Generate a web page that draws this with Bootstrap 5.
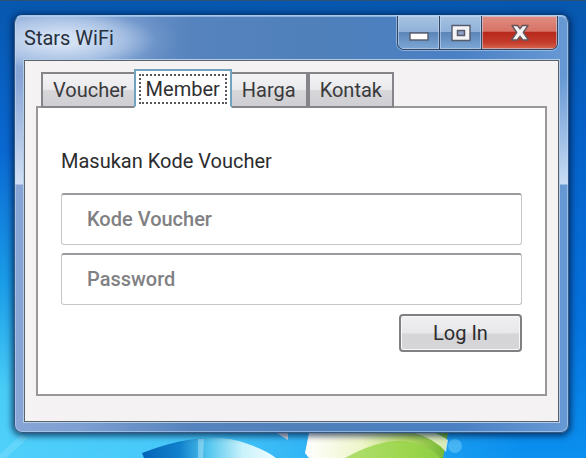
<!DOCTYPE html>
<html lang="id">
<head>
<meta charset="utf-8">
<meta name="viewport" content="width=device-width, initial-scale=1">
<title>Stars WiFi</title>
<link href="https://cdn.jsdelivr.net/npm/bootstrap@5.3.0/dist/css/bootstrap.min.css" rel="stylesheet">
<style>
body{font-family:Roboto,"Liberation Sans",sans-serif;font-size:20px;line-height:24px;color:#2c2c2e;background:#0560c4}
.wallpaper{z-index:-1}
.aero{margin:15px 17px 0 14px;padding:0 9px 10px;border-radius:8px;border:1px solid #36587f;border-top-color:#a9c8e6;
 background:radial-gradient(ellipse 115px 38px at 48px 24px,rgba(226,237,250,.85) 15%,rgba(205,222,244,.55) 55%,rgba(150,180,220,.2) 80%,transparent 100%),linear-gradient(to bottom,transparent 0,transparent 60px,rgba(235,243,255,.75) 168px,transparent 169px),linear-gradient(90deg,#88a5d6 0,#7d9fd2 12%,#5683bd 32%,#4f80ba 55%,#4a80c4 80%,#6799d4 100%);
 box-shadow:inset 0 0 0 1px rgba(190,220,250,.55),0 1px 6px 2px rgba(0,20,60,.7)}
.aero-title{height:44px}
.caption{font-size:20px;line-height:24px;font-weight:400;margin:10px 0 0;color:#26303e}
.win-controls{height:34px;border:1px solid #34445e;border-top:0;border-radius:0 0 7px 7px;overflow:hidden;box-shadow:0 0 0 1px rgba(180,210,240,.6);margin-right:1px}
.win-btn{width:42px;padding:0;border:0;border-right:1px solid #34445e;background:linear-gradient(#a8c3e2 0,#8fb0d8 48%,#5c85b8 50%,#7da7d4 100%);box-shadow:inset 0 0 0 1px rgba(200,222,245,.55)}
.win-close{width:75px;border-right:0;background:linear-gradient(#e08d82 0,#d77266 46%,#b8281c 50%,#c43c2b 80%,#d8664f 100%)}
.client{background:#f5f2f4;border:1px solid #59636f;box-shadow:0 0 0 1px #b4cbe4;padding:8px 11px 25px}
.tabs-row{padding-left:5px;border:0;margin-bottom:-2px}
.tabs-row .nav-link{font-size:20px;line-height:24px;color:#3a3a3c;padding:4px 10px;height:36px;border:2px solid #858589;border-radius:0;margin:0;background:linear-gradient(#f3f2f4 0,#eae9eb 48%,#d7d6d9 52%,#cfced2 100%)}
.tabs-row .nav-link.active{height:39px;padding:3px;margin:0 -2px 0 -5px;border-color:#71a2bf;border-bottom-color:#fff;background:#fff;color:#303033;z-index:1}
.dotted-focus{display:block;border:2px dotted #58585a;padding:1px 5px;height:30px}
.pane{background:#fff;border:2px solid #98979a;padding:41px 23px 42px 23px}
.prompt{margin-bottom:20px;line-height:24px}
.pane .form-control{height:52px;border:1px solid #c6c5c9;border-top:2px solid #9b9b9f;border-radius:3px;padding:0 25px 2px;font-size:20px;font-weight:500;margin-bottom:8px;background:#fff}
.pane .form-control::placeholder{color:#818184;opacity:1}
.login-btn{width:123px;height:38px;padding:0;font-size:20px;line-height:24px;color:#2c2c2e;border:2px solid #808083;border-radius:4px;background:linear-gradient(#f0eff1 0,#e8e7e9 48%,#d5d4d7 55%,#d6d5d8 100%);box-shadow:inset 0 0 0 1px #f8f8f9;margin-top:1px}
</style>
<script src="https://cdn.jsdelivr.net/npm/bootstrap@5.3.0/dist/js/bootstrap.bundle.min.js"></script>
</head>
<body class="vh-100 overflow-hidden position-relative">
<svg class="wallpaper position-absolute top-0 start-0 w-100 h-100" viewBox="0 0 586 458" preserveAspectRatio="none" aria-hidden="true">
 <defs>
  <linearGradient id="sky" x1="0" y1="0" x2="0" y2="1"><stop offset="0" stop-color="#0757ad"/><stop offset=".3" stop-color="#0561c8"/><stop offset=".7" stop-color="#0672dc"/><stop offset="1" stop-color="#0a90ef"/></linearGradient>
  <linearGradient id="skyLeft" x1="0" y1="0" x2="0" y2="1"><stop offset="0" stop-color="#0757ad"/><stop offset=".33" stop-color="#0a68d2"/><stop offset=".62" stop-color="#1a9de8"/><stop offset=".85" stop-color="#48cdf7"/><stop offset="1" stop-color="#50d0fb"/></linearGradient>
  <linearGradient id="fade" x1="0" x2="1"><stop offset="0" stop-color="#fff"/><stop offset=".35" stop-color="#ddd"/><stop offset=".9" stop-color="#000"/></linearGradient>
  <mask id="leftMask"><rect width="586" height="458" fill="url(#fade)"/></mask>
  <linearGradient id="orb" x1="0" x2="1"><stop offset="0" stop-color="#0563b8"/><stop offset=".28" stop-color="#1081cc"/><stop offset=".5" stop-color="#55c7ef"/><stop offset=".75" stop-color="#c9f2fb"/><stop offset="1" stop-color="#eefcff"/></linearGradient>
  <linearGradient id="leaf" x1="0" x2="1"><stop offset="0" stop-color="#fff"/><stop offset=".4" stop-color="#edf5c9"/><stop offset=".7" stop-color="#b9dd68"/><stop offset="1" stop-color="#6db32e"/></linearGradient>
 </defs>
 <rect width="586" height="458" fill="url(#sky)"/>
 <rect width="586" height="458" fill="url(#skyLeft)" mask="url(#leftMask)"/>
 <rect width="586" height="1" fill="#2d5277"/>
 <path d="M0 454 22 434 28 438 6 458H0Z" fill="#8be2fb" opacity=".35"/>
 <path d="M142 453Q207 428 248 444Q266 450 276 458H144Z" fill="url(#orb)"/>
 <path d="M198 439h6l-1 19h-5Z" fill="#a7e3f8" opacity=".55"/>
 <path d="M275 432h13v8Z" fill="#d5dce4"/>
 <path d="M310 428H449L443 458H309L305 453Z" fill="url(#leaf)"/>
 <path d="M345 458Q386 435 414 443Q434 449 440 458Z" fill="#94d445" opacity=".75"/>
 <path d="M411 432Q434 438 446 452L448 440Q436 432 424 430Z" fill="#f3f9da" opacity=".8"/>
 <circle cx="455" cy="446" r="7" fill="#6ccaf9" opacity=".55"/>
</svg>
<main class="aero">
 <header class="aero-title d-flex justify-content-between align-items-start">
  <h1 class="caption">Stars WiFi</h1>
  <div class="win-controls d-flex">
   <button type="button" class="win-btn d-flex align-items-center justify-content-center" aria-label="Minimize"><svg width="22" height="20" viewBox="0 0 22 20"><rect x="2" y="10" width="18" height="7" fill="#fff" stroke="#555b6c" stroke-width="1.4"/></svg></button>
   <button type="button" class="win-btn d-flex align-items-center justify-content-center" aria-label="Maximize"><svg width="22" height="20" viewBox="0 0 22 20"><path d="M2 2.500h18v15H2Z" fill="#f4f4f6" stroke="#555b6c" stroke-width="1.4"/><path d="M7.500 7.500h7v5h-7Z" fill="#8ea0c5" stroke="#555b6c" stroke-width="1.5"/></svg></button>
   <button type="button" class="win-btn win-close d-flex align-items-center justify-content-center" aria-label="Close"><svg width="22" height="20" viewBox="0 0 22 20"><path d="M3 2.500H8.500L11 5.800 13.500 2.500H19L14.300 9.500 19.500 17H13.800L11 13.300 8.200 17H2.500L7.700 9.500Z" fill="#f5f4f4" stroke="#65545a" stroke-width="1.4" stroke-linejoin="round"/></svg></button>
  </div>
 </header>
 <section class="client">
  <ul class="nav nav-tabs tabs-row align-items-end flex-nowrap" role="tablist">
   <li class="nav-item" role="presentation"><button type="button" class="nav-link" role="tab" aria-selected="false">Voucher</button></li>
   <li class="nav-item" role="presentation"><button type="button" class="nav-link active position-relative" role="tab" aria-selected="true" aria-controls="member"><span class="dotted-focus">Member</span></button></li>
   <li class="nav-item" role="presentation"><button type="button" class="nav-link" role="tab" aria-selected="false">Harga</button></li>
   <li class="nav-item" role="presentation"><button type="button" class="nav-link" role="tab" aria-selected="false">Kontak</button></li>
  </ul>
  <form class="pane" id="member" role="tabpanel">
   <p class="prompt">Masukan Kode Voucher</p>
   <input class="form-control" type="text" placeholder="Kode Voucher" aria-label="Kode Voucher">
   <input class="form-control" type="password" placeholder="Password" aria-label="Password">
   <div class="d-flex justify-content-end"><button type="button" class="btn login-btn">Log In</button></div>
  </form>
 </section>
</main>
</body>
</html>
